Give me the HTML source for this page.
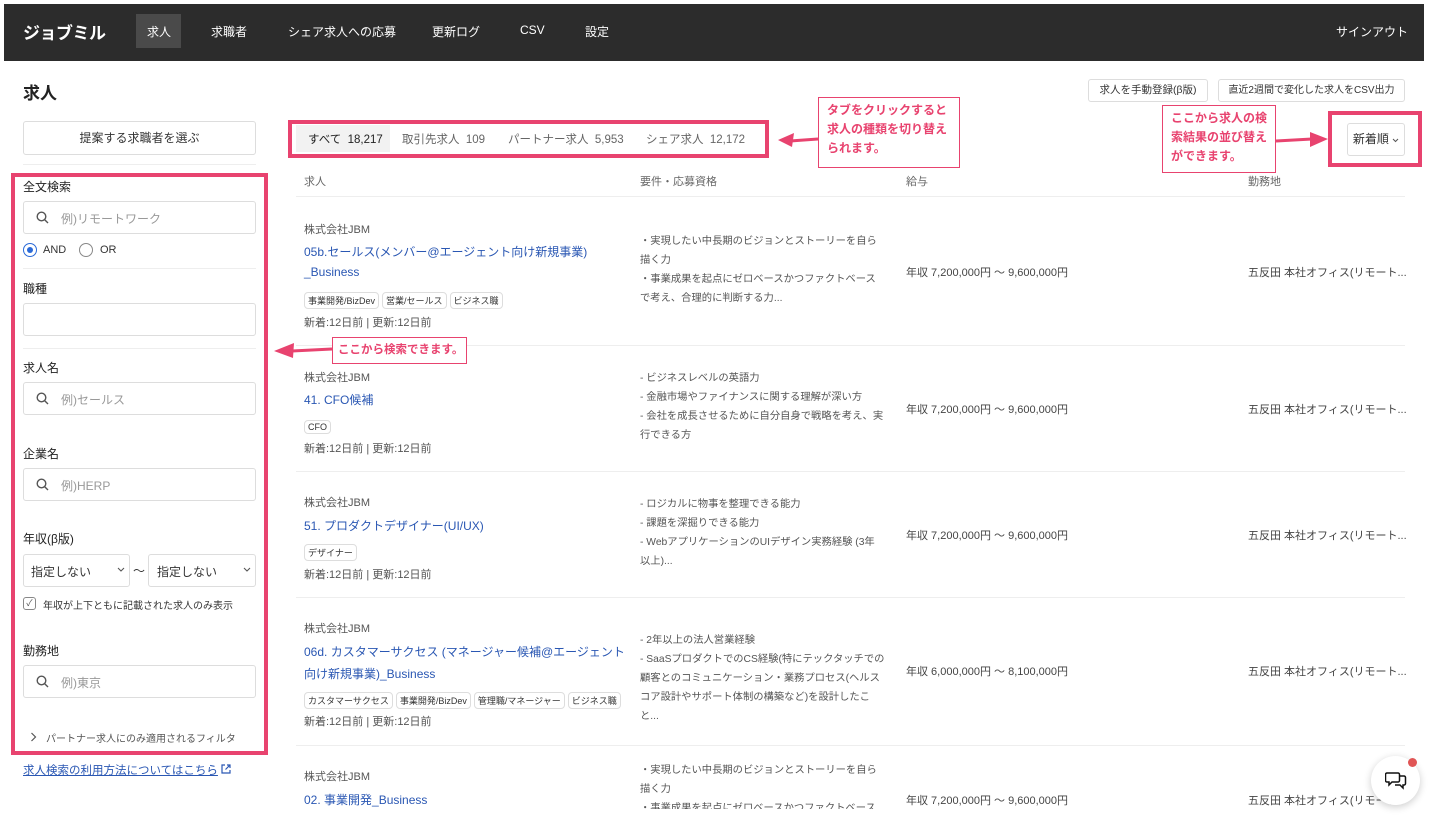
<!DOCTYPE html>
<html><head><meta charset="utf-8"><style>
*{box-sizing:border-box;margin:0;padding:0}
body{width:1432px;height:828px;overflow:hidden;background:#fff;font-family:"Liberation Sans","Noto Sans CJK JP",sans-serif;color:#333;position:relative}
.a{position:absolute;white-space:nowrap}
.nav{left:4px;top:4px;width:1420px;height:57px;background:#2c2c2c}
.ni{color:#fff;font-size:12px;top:23px}
.lbl{font-size:12px;color:#222}
.inp{border:1px solid #ddd;border-radius:3px;background:#fff}
.ph{color:#999;font-size:12px}
.btn{border:1px solid #ddd;border-radius:3px;background:#fff;font-size:10.5px;color:#333;text-align:center}
.pink{border:4px solid #e8436f}
.call{border:1px solid #e8436f;background:#fff;color:#e8436f;font-size:12px;font-weight:bold;line-height:19px;padding:3px 8px;white-space:normal}
.hd{font-size:11px;color:#666;top:173px}
.line{height:1px;background:#eee;left:296px;width:1109px}
.co{font-size:11px;color:#555}
.tt{font-size:12px;color:#2a57b3}
.tag{display:inline-block;border:1px solid #ddd;border-radius:4px;font-size:9px;padding:1px 3px;margin-right:3px;color:#333;background:#fff}
.dt{font-size:11px;color:#555}
.rq{font-size:10.3px;color:#555;line-height:19px;white-space:normal;width:245px}
.sal{font-size:11px;color:#444}
.sep{height:1px;background:#eee;left:23px;width:233px}
</style></head><body>
<div class="a nav"></div>
<div class="a" style="left:23px;top:19px;color:#fff;font-size:17px;font-weight:bold;letter-spacing:-0.5px">ジョブミル</div>
<div class="a" style="left:136px;top:14px;width:45px;height:34px;background:#4a4a4a"></div>
<div class="a ni" style="left:147px">求人</div>
<div class="a ni" style="left:211px">求職者</div>
<div class="a ni" style="left:288px">シェア求人への応募</div>
<div class="a ni" style="left:432px">更新ログ</div>
<div class="a ni" style="left:520px">CSV</div>
<div class="a ni" style="left:585px">設定</div>
<div class="a ni" style="left:1336px">サインアウト</div>

<div class="a" style="left:23px;top:79px;font-size:17px;font-weight:bold;color:#222">求人</div>
<div class="a btn" style="left:23px;top:121px;width:233px;height:34px;line-height:32px;font-size:12px">提案する求職者を選ぶ</div>
<div class="a sep" style="top:164px"></div>

<div class="a pink" style="left:11px;top:173px;width:257px;height:582px"></div>
<div class="a lbl" style="left:23px;top:178px">全文検索</div>
<div class="a inp" style="left:23px;top:201px;width:233px;height:33px"></div>
<svg class="a" style="left:36px;top:211px" width="13" height="13" viewBox="0 0 13 13"><circle cx="5.5" cy="5.5" r="4.3" fill="none" stroke="#555" stroke-width="1.4"/><path d="M8.7 8.7 12 12" stroke="#555" stroke-width="1.4"/></svg>
<div class="a ph" style="left:61px;top:210px">例)リモートワーク</div>
<div class="a" style="left:23px;top:243px;width:14px;height:14px;border:1px solid #2a6ad8;border-radius:50%"></div>
<div class="a" style="left:27px;top:247px;width:6px;height:6px;background:#2a6ad8;border-radius:50%"></div>
<div class="a" style="left:43px;top:244px;font-size:11px">AND</div>
<div class="a" style="left:79px;top:243px;width:14px;height:14px;border:1px solid #888;border-radius:50%"></div>
<div class="a" style="left:100px;top:244px;font-size:11px">OR</div>
<div class="a sep" style="top:268px"></div>
<div class="a lbl" style="left:23px;top:280px">職種</div>
<div class="a inp" style="left:23px;top:303px;width:233px;height:33px"></div>
<div class="a sep" style="top:348px"></div>
<div class="a lbl" style="left:23px;top:359px">求人名</div>
<div class="a inp" style="left:23px;top:382px;width:233px;height:33px"></div>
<svg class="a" style="left:36px;top:392px" width="13" height="13" viewBox="0 0 13 13"><circle cx="5.5" cy="5.5" r="4.3" fill="none" stroke="#555" stroke-width="1.4"/><path d="M8.7 8.7 12 12" stroke="#555" stroke-width="1.4"/></svg>
<div class="a ph" style="left:61px;top:391px">例)セールス</div>
<div class="a lbl" style="left:23px;top:445px">企業名</div>
<div class="a inp" style="left:23px;top:468px;width:233px;height:33px"></div>
<svg class="a" style="left:36px;top:478px" width="13" height="13" viewBox="0 0 13 13"><circle cx="5.5" cy="5.5" r="4.3" fill="none" stroke="#555" stroke-width="1.4"/><path d="M8.7 8.7 12 12" stroke="#555" stroke-width="1.4"/></svg>
<div class="a ph" style="left:61px;top:477px">例)HERP</div>
<div class="a lbl" style="left:23px;top:530px">年収(β版)</div>
<div class="a inp" style="left:23px;top:554px;width:107px;height:33px"></div>
<div class="a" style="left:31px;top:563px;font-size:12px">指定しない</div>
<svg class="a" style="left:117px;top:567px" width="8" height="6" viewBox="0 0 8 6"><path d="M1 1l3 3 3-3" fill="none" stroke="#555" stroke-width="1.1"/></svg>
<div class="a" style="left:133px;top:562px;font-size:12px">〜</div>
<div class="a inp" style="left:148px;top:554px;width:108px;height:33px"></div>
<div class="a" style="left:157px;top:563px;font-size:12px">指定しない</div>
<svg class="a" style="left:243px;top:567px" width="8" height="6" viewBox="0 0 8 6"><path d="M1 1l3 3 3-3" fill="none" stroke="#555" stroke-width="1.1"/></svg>
<div class="a" style="left:23px;top:597px;width:13px;height:13px;border:1px solid #888;border-radius:3px;font-size:9px;line-height:11px;text-align:center;color:#555">✓</div>
<div class="a" style="left:43px;top:597px;font-size:10px">年収が上下ともに記載された求人のみ表示</div>
<div class="a lbl" style="left:23px;top:642px">勤務地</div>
<div class="a inp" style="left:23px;top:665px;width:233px;height:33px"></div>
<svg class="a" style="left:36px;top:675px" width="13" height="13" viewBox="0 0 13 13"><circle cx="5.5" cy="5.5" r="4.3" fill="none" stroke="#555" stroke-width="1.4"/><path d="M8.7 8.7 12 12" stroke="#555" stroke-width="1.4"/></svg>
<div class="a ph" style="left:61px;top:674px">例)東京</div>
<svg class="a" style="left:30px;top:732px" width="7" height="10" viewBox="0 0 7 10"><path d="M1.5 1l4 4-4 4" fill="none" stroke="#555" stroke-width="1.2"/></svg>
<div class="a" style="left:46px;top:730px;font-size:10px;color:#555">パートナー求人にのみ適用されるフィルタ</div>
<div class="a" style="left:23px;top:762px;font-size:11.5px;color:#2a57b3;text-decoration:underline">求人検索の利用方法についてはこちら</div>
<svg class="a" style="left:221px;top:764px" width="10" height="10" viewBox="0 0 10 10"><path d="M4 1H1v8h8V6M6 1h3v3M9 1 4.5 5.5" fill="none" stroke="#2a57b3" stroke-width="1.2"/></svg>

<!-- tabs -->
<div class="a pink" style="left:288px;top:120px;width:481px;height:38px"></div>
<div class="a" style="left:296px;top:125px;width:94px;height:27px;background:#f2f2f2"></div>
<div class="a" style="left:308px;top:131px;font-size:11.5px;color:#222">すべて&nbsp; 18,217</div>
<div class="a" style="left:402px;top:131px;font-size:11.5px;color:#666">取引先求人&nbsp; 109</div>
<div class="a" style="left:508px;top:131px;font-size:11.5px;color:#666">パートナー求人&nbsp; 5,953</div>
<div class="a" style="left:646px;top:131px;font-size:11.5px;color:#666">シェア求人&nbsp; 12,172</div>
<svg class="a" style="left:770px;top:130px" width="50" height="20" viewBox="0 0 50 20"><path d="M48 9 L20 11" stroke="#e8436f" stroke-width="3"/><path d="M8 10 L24 3 L22 17 Z" fill="#e8436f"/></svg>
<div class="a call" style="left:818px;top:97px;width:142px;height:71px">タブをクリックすると求人の種類を切り替えられます。</div>

<div class="a btn" style="left:1088px;top:79px;width:120px;height:23px;line-height:21px">求人を手動登録(β版)</div>
<div class="a btn" style="left:1218px;top:79px;width:187px;height:23px;line-height:21px;font-size:10px">直近2週間で変化した求人をCSV出力</div>
<div class="a call" style="left:1162px;top:105px;width:114px;height:68px">ここから求人の検索結果の並び替えができます。</div>
<svg class="a" style="left:1276px;top:130px" width="54" height="20" viewBox="0 0 54 20"><path d="M0 11 L36 9" stroke="#e8436f" stroke-width="3"/><path d="M52 9 L34 2 L34 17 Z" fill="#e8436f"/></svg>
<div class="a pink" style="left:1328px;top:111px;width:94px;height:56px"></div>
<div class="a btn" style="left:1347px;top:123px;width:58px;height:33px;line-height:31px;font-size:12px">新着順 <svg width="7" height="5" viewBox="0 0 7 5"><path d="M1 1l2.5 2.5L6 1" fill="none" stroke="#555" stroke-width="1"/></svg></div>

<div class="a hd" style="left:304px">求人</div>
<div class="a hd" style="left:640px">要件・応募資格</div>
<div class="a hd" style="left:906px">給与</div>
<div class="a hd" style="left:1248px">勤務地</div>
<div class="a line" style="top:196px"></div>

<!-- row1 -->
<div class="a co" style="left:304px;top:221px">株式会社JBM</div>
<div class="a tt" style="left:304px;top:243px">05b.セールス(メンバー@エージェント向け新規事業)</div>
<div class="a tt" style="left:304px;top:265px">_Business</div>
<div class="a" style="left:304px;top:291px"><span class="tag">事業開発/BizDev</span><span class="tag">営業/セールス</span><span class="tag">ビジネス職</span></div>
<div class="a dt" style="left:304px;top:314px">新着:12日前 | 更新:12日前</div>
<div class="a rq" style="left:640px;top:232px">・実現したい中長期のビジョンとストーリーを自ら描く力<br>・事業成果を起点にゼロベースかつファクトベースで考え、合理的に判断する力...</div>
<div class="a sal" style="left:906px;top:264px">年収 7,200,000円 〜 9,600,000円</div>
<div class="a sal" style="left:1248px;top:264px">五反田 本社オフィス(リモート...</div>
<div class="a line" style="top:345px"></div>

<!-- row2 -->
<div class="a co" style="left:304px;top:369px">株式会社JBM</div>
<div class="a tt" style="left:304px;top:391px">41. CFO候補</div>
<div class="a" style="left:304px;top:417px"><span class="tag">CFO</span></div>
<div class="a dt" style="left:304px;top:440px">新着:12日前 | 更新:12日前</div>
<div class="a rq" style="left:640px;top:369px">- ビジネスレベルの英語力<br>- 金融市場やファイナンスに関する理解が深い方<br>- 会社を成長させるために自分自身で戦略を考え、実行できる方</div>
<div class="a sal" style="left:906px;top:401px">年収 7,200,000円 〜 9,600,000円</div>
<div class="a sal" style="left:1248px;top:401px">五反田 本社オフィス(リモート...</div>
<div class="a line" style="top:471px"></div>

<!-- row3 -->
<div class="a co" style="left:304px;top:494px">株式会社JBM</div>
<div class="a tt" style="left:304px;top:517px">51. プロダクトデザイナー(UI/UX)</div>
<div class="a" style="left:304px;top:543px"><span class="tag">デザイナー</span></div>
<div class="a dt" style="left:304px;top:566px">新着:12日前 | 更新:12日前</div>
<div class="a rq" style="left:640px;top:495px">- ロジカルに物事を整理できる能力<br>- 課題を深掘りできる能力<br>- WebアプリケーションのUIデザイン実務経験 (3年以上)...</div>
<div class="a sal" style="left:906px;top:527px">年収 7,200,000円 〜 9,600,000円</div>
<div class="a sal" style="left:1248px;top:527px">五反田 本社オフィス(リモート...</div>
<div class="a line" style="top:597px"></div>

<!-- row4 -->
<div class="a co" style="left:304px;top:620px">株式会社JBM</div>
<div class="a tt" style="left:304px;top:643px">06d. カスタマーサクセス (マネージャー候補@エージェント</div>
<div class="a tt" style="left:304px;top:665px">向け新規事業)_Business</div>
<div class="a" style="left:304px;top:691px"><span class="tag">カスタマーサクセス</span><span class="tag">事業開発/BizDev</span><span class="tag">管理職/マネージャー</span><span class="tag">ビジネス職</span></div>
<div class="a dt" style="left:304px;top:713px">新着:12日前 | 更新:12日前</div>
<div class="a rq" style="left:640px;top:631px">- 2年以上の法人営業経験<br>- SaaSプロダクトでのCS経験(特にテックタッチでの顧客とのコミュニケーション・業務プロセス(ヘルスコア設計やサポート体制の構築など)を設計したこと...</div>
<div class="a sal" style="left:906px;top:663px">年収 6,000,000円 〜 8,100,000円</div>
<div class="a sal" style="left:1248px;top:663px">五反田 本社オフィス(リモート...</div>
<div class="a line" style="top:745px"></div>

<!-- row5 -->
<div class="a co" style="left:304px;top:768px">株式会社JBM</div>
<div class="a tt" style="left:304px;top:791px">02. 事業開発_Business</div>
<div class="a rq" style="left:640px;top:761px;height:48px;overflow:hidden">・実現したい中長期のビジョンとストーリーを自ら描く力<br>・事業成果を起点にゼロベースかつファクトベースで</div>
<div class="a sal" style="left:906px;top:792px">年収 7,200,000円 〜 9,600,000円</div>
<div class="a sal" style="left:1248px;top:792px">五反田 本社オフィス(リモート</div>
<div class="a" style="left:0;top:809px;width:1432px;height:19px;background:#fff"></div>

<svg class="a" style="left:272px;top:340px" width="62" height="20" viewBox="0 0 62 20"><path d="M60 9 L20 11" stroke="#e8436f" stroke-width="3"/><path d="M2 11 L22 3 L21 18 Z" fill="#e8436f"/></svg>
<div class="a call" style="left:332px;top:337px;width:135px;height:27px;line-height:19px;padding:3px 5px;white-space:nowrap;font-size:11.5px">ここから検索できます。</div>

<div class="a" style="left:1371px;top:756px;width:49px;height:49px;border-radius:50%;background:#fff;box-shadow:0 2px 8px rgba(0,0,0,.2)"></div>
<svg class="a" style="left:1385px;top:770px" width="22" height="20" viewBox="0 0 22 20"><path d="M2 3h11a1.5 1.5 0 0 1 1.5 1.5v6a1.5 1.5 0 0 1-1.5 1.5H7l-3 3v-3H2A1.5 1.5 0 0 1 .5 10.5v-6A1.5 1.5 0 0 1 2 3z" fill="#fff" stroke="#111" stroke-width="1.5"/><path d="M15 6h4a1.5 1.5 0 0 1 1.5 1.5v6A1.5 1.5 0 0 1 19 15h-1v3l-3-3h-5" fill="none" stroke="#111" stroke-width="1.5"/></svg>
<div class="a" style="left:1408px;top:758px;width:9px;height:9px;border-radius:50%;background:#e05555"></div>
</body></html>
